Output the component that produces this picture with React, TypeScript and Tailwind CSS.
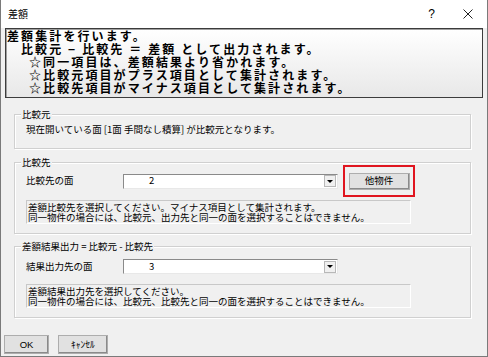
import React from "react";

const jp = { fontFamily: '"Noto Sans CJK JP", "Noto Sans", sans-serif' };

function Combo({ value }: { value: string }) {
  return (
    <div className="flex h-[15px] w-[215px] items-center border border-t-[#8a8a8a] border-l-[#8a8a8a] border-r-[#e8e8e8] border-b-[#e8e8e8] bg-white">
      <div className="flex-1 pl-[25px] text-[9.5px] leading-none text-black">{value}</div>
      <div className="mr-[1px] flex h-[12px] w-[12px] items-center justify-center border border-[#b8b8b8] bg-[#f0f0f0]">
        <div className="h-0 w-0 border-x-[3px] border-t-[3px] border-x-transparent border-t-black" />
      </div>
    </div>
  );
}

function Group({
  legend,
  className,
  children,
}: {
  legend: string;
  className: string;
  children: React.ReactNode;
}) {
  return (
    <div
      className={`relative ml-[13px] w-[457px] border border-[#d0d0d0] shadow-[inset_1px_1px_0_#ffffff,1px_1px_0_#ffffff] ${className}`}
    >
      <div className="absolute left-[6px] top-[-7px] bg-[#f0f0f0] px-[1px] text-[9.5px] leading-[12px] text-black">
        {legend}
      </div>
      {children}
    </div>
  );
}

function Desc({ lines }: { lines: string[] }) {
  return (
    <div className="ml-[11px] h-[24px] w-[385px] border border-t-[#c8c8c8] border-l-[#c8c8c8] border-r-[#ffffff] border-b-[#ffffff] bg-[#f0f0f0] pl-[1px] pt-[1px] text-[9.5px] leading-[10px] text-black">
      {lines.map((l) => (
        <div key={l} className="whitespace-nowrap">
          {l}
        </div>
      ))}
    </div>
  );
}

export default function App() {
  const headerLines: { t: string; pl: string }[] = [
    { t: "差額集計を行います。", pl: "pl-[1px]" },
    { t: "比較元 − 比較先 ＝ 差額 として出力されます。", pl: "pl-[15px]" },
    { t: "☆同一項目は、差額結果より省かれます。", pl: "pl-[23px]" },
    { t: "☆比較元項目がプラス項目として集計されます。", pl: "pl-[23px]" },
    { t: "☆比較先項目がマイナス項目として集計されます。", pl: "pl-[23px]" },
  ];
  return (
    <div
      style={jp}
      className="flex h-[357px] w-[488px] flex-col border-x border-b border-[#7a7a7a] bg-[#f0f0f0] text-black"
    >
      {/* title bar */}
      <div className="flex h-[28px] shrink-0 items-center bg-white pl-[7px] pr-[14px]">
        <div className="text-[10px] leading-none">差額</div>
        <div className="flex-1" />
        <div className="mr-[28px] text-[12px] leading-none" style={{ fontFamily: '"Liberation Sans", sans-serif' }}>
          ?
        </div>
        <svg width="10" height="10" viewBox="0 0 10 10">
          <path d="M0.5 0.5 L9.5 9.5 M9.5 0.5 L0.5 9.5" stroke="#222" strokeWidth="1" />
        </svg>
      </div>

      {/* header message */}
      <div className="mx-[4px] h-[70px] shrink-0 border border-[#3c3c3c] bg-gradient-to-b from-[#ffffff] to-[#e8e8e8] shadow-[inset_1px_1px_0_#a0a0a0]">
        {headerLines.map((l) => (
          <div
            key={l.t}
            className={`whitespace-nowrap text-[12px] font-bold leading-[13px] tracking-[2.1px] ${l.pl}`}
          >
            {l.t}
          </div>
        ))}
      </div>

      {/* 比較元 */}
      <Group legend="比較元" className="mt-[16px] h-[35px] shrink-0">
        <div className="pl-[11px] pt-[8px] text-[9.5px] leading-[12px] whitespace-nowrap">
          現在開いている面 [1面 手間なし積算] が比較元となります。
        </div>
      </Group>

      {/* 比較先 */}
      <Group legend="比較先" className="mt-[13px] h-[72px] shrink-0">
        <div className="flex items-center pl-[11px] pt-[2px]">
          <div className="w-[97px] text-[9.5px] leading-none">比較先の面</div>
          <Combo value="2" />
          <div className="ml-[5px] flex h-[32px] w-[72px] items-center justify-center border-2 border-[#e0151f]">
            <button className="h-[17px] w-[61px] border border-[#adadad] bg-[#e1e1e1] text-[9.5px] leading-none shadow-[inset_-1px_-1px_0_#8a8a8a]">
              他物件
            </button>
          </div>
        </div>
        <div className="mt-[3px]">
          <Desc
            lines={[
              "差額比較先を選択してください。マイナス項目として集計されます。",
              "同一物件の場合には、比較元、出力先と同一の面を選択することはできません。",
            ]}
          />
        </div>
      </Group>

      {/* 差額結果出力 */}
      <Group legend="差額結果出力 = 比較元 - 比較先" className="mt-[12px] h-[72px] shrink-0">
        <div className="flex items-center pl-[11px] pt-[12px]">
          <div className="w-[97px] text-[9.5px] leading-none">結果出力先の面</div>
          <Combo value="3" />
        </div>
        <div className="mt-[10px]">
          <Desc
            lines={[
              "差額結果出力先を選択してください。",
              "同一物件の場合には、比較元、比較先と同一の面を選択することはできません。",
            ]}
          />
        </div>
      </Group>

      {/* buttons */}
      <div className="ml-[3px] mt-[17px] flex gap-[9px]">
        <button className="h-[19px] w-[45px] border border-[#adadad] bg-[#e1e1e1] text-[9.5px] leading-none shadow-[inset_-1px_-1px_0_#8a8a8a]" style={{ fontFamily: '"Liberation Sans", sans-serif' }}>
          OK
        </button>
        <button className="h-[19px] w-[50px] border border-[#adadad] bg-[#e1e1e1] text-[9.5px] leading-none shadow-[inset_-1px_-1px_0_#8a8a8a]">
          ｷｬﾝｾﾙ
        </button>
      </div>
    </div>
  );
}
